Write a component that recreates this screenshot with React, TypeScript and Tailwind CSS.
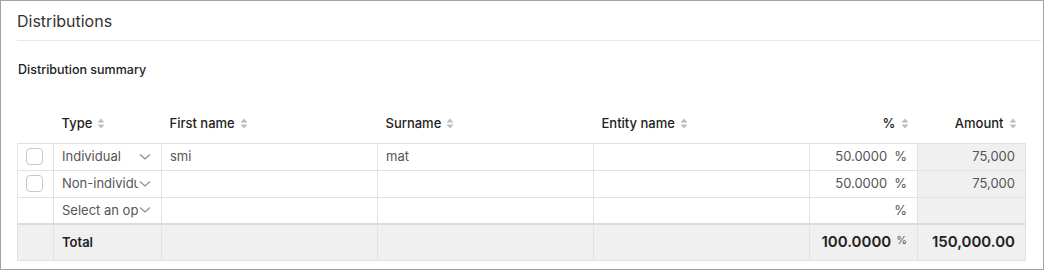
// Distributions panel with summary table

interface Row {
  checkbox: boolean;
  type: string;
  first: string;
  surname: string;
  entity: string;
  pct: string;
  amount: string;
}

const rows: Row[] = [
  { checkbox: true, type: 'Individual', first: 'smi', surname: 'mat', entity: '', pct: '50.0000', amount: '75,000' },
  { checkbox: true, type: 'Non-individual', first: '', surname: '', entity: '', pct: '50.0000', amount: '75,000' },
  { checkbox: false, type: 'Select an option', first: '', surname: '', entity: '', pct: '', amount: '' },
];

function SortIcon() {
  return (
    <svg width="8" height="11" viewBox="0 0 8 11" className="ml-[5px] inline-block shrink-0">
      <path d="M4 0.5 L7.5 4.5 H0.5 Z" fill="#bdbdbd" />
      <path d="M4 10.5 L7.5 6.5 H0.5 Z" fill="#bdbdbd" />
    </svg>
  );
}

function Chevron() {
  return (
    <svg width="12" height="8" viewBox="0 0 12 8" className="shrink-0">
      <path d="M1 1.5 L6 6 L11 1.5" fill="none" stroke="#8a8a8a" strokeWidth="1.1" />
    </svg>
  );
}

function HeaderCell({ label, right }: { label: string; right?: boolean }) {
  return (
    <th className={`h-[38px] font-medium text-[13px] text-[#222] ${right ? 'text-right pl-2 pr-[9px]' : 'text-left px-2'}`}>
      <span className={`flex items-center ${right ? 'justify-end' : ''}`}>
        {label}
        <SortIcon />
      </span>
    </th>
  );
}

export default function App() {
  const cell = 'border border-[#e2e2e2] h-[27px] px-2 text-[13px] text-[#555]';
  const totalCell = 'border border-[#e2e2e2] border-t-2 border-t-[#dcdcdc]';
  return (
    <div className="w-[1044px] h-[270px] bg-white" style={{ fontFamily: 'Inter, "Noto Sans", sans-serif' }}>
      <div className="h-[270px] border border-[#a3a3a3] pl-4 pr-[2px]">
        {/* Title */}
        <div className="h-[40px] flex items-center border-b border-[#e8e8e8] pt-[1px]">
          <h2 className="text-[16px] text-[#333]">Distributions</h2>
        </div>
        <h3 className="mt-[20px] pl-[1px] text-[12.5px] font-medium text-[#222] leading-[17px]">Distribution summary</h3>

        <table className="mt-[27px] border-collapse table-fixed w-[1008px]">
          <colgroup>
            <col className="w-[36px]" />
            <col className="w-[108px]" />
            <col className="w-[216px]" />
            <col className="w-[216px]" />
            <col className="w-[216px]" />
            <col className="w-[108px]" />
            <col className="w-[108px]" />
          </colgroup>
          <thead>
            <tr>
              <th className="h-[38px]" />
              <HeaderCell label="Type" />
              <HeaderCell label="First name" />
              <HeaderCell label="Surname" />
              <HeaderCell label="Entity name" />
              <HeaderCell label="%" right />
              <HeaderCell label="Amount" right />
            </tr>
          </thead>
          <tbody>
            {rows.map((r, idx) => (
              <tr key={idx}>
                <td className="border border-[#e2e2e2] h-[27px]">
                  {r.checkbox && (
                    <div className="ml-[8px] w-[17px] h-[17px] rounded-[4px] border border-[#c8c8c8] bg-white" />
                  )}
                </td>
                <td className={cell}>
                  <div className="flex items-center justify-between">
                    <span className={`overflow-hidden whitespace-nowrap ${r.type === 'Individual' ? '' : 'w-[76px]'}`}>{r.type}</span>
                    <span className="mr-[2px]">
                      <Chevron />
                    </span>
                  </div>
                </td>
                <td className={cell}>{r.first}</td>
                <td className={cell}>{r.surname}</td>
                <td className={cell}>{r.entity}</td>
                <td className={`${cell} text-right`}>
                  <span>{r.pct}</span>
                  <span className="ml-[7px] mr-[2px]">%</span>
                </td>
                <td className={`${cell} text-right bg-[#f0f0f0] !pr-[10px]`}>{r.amount}</td>
              </tr>
            ))}
            <tr className="bg-[#f0f0f0]">
              <td className={`${totalCell} h-[36px]`} />
              <td className={`${totalCell} px-2 text-[13px] font-semibold text-[#222]`}>Total</td>
              <td className={totalCell} />
              <td className={totalCell} />
              <td className={totalCell} />
              <td className={`${totalCell} px-2 text-right text-[15px] font-semibold text-[#222]`}>
                100.0000
                <sup className="ml-[5px] mr-[2px] text-[11px] font-normal text-[#555] relative top-[-3px]">%</sup>
              </td>
              <td className={`${totalCell} pl-2 pr-[10px] text-right text-[15px] font-semibold text-[#222]`}>150,000.00</td>
            </tr>
          </tbody>
        </table>
      </div>
    </div>
  );
}
